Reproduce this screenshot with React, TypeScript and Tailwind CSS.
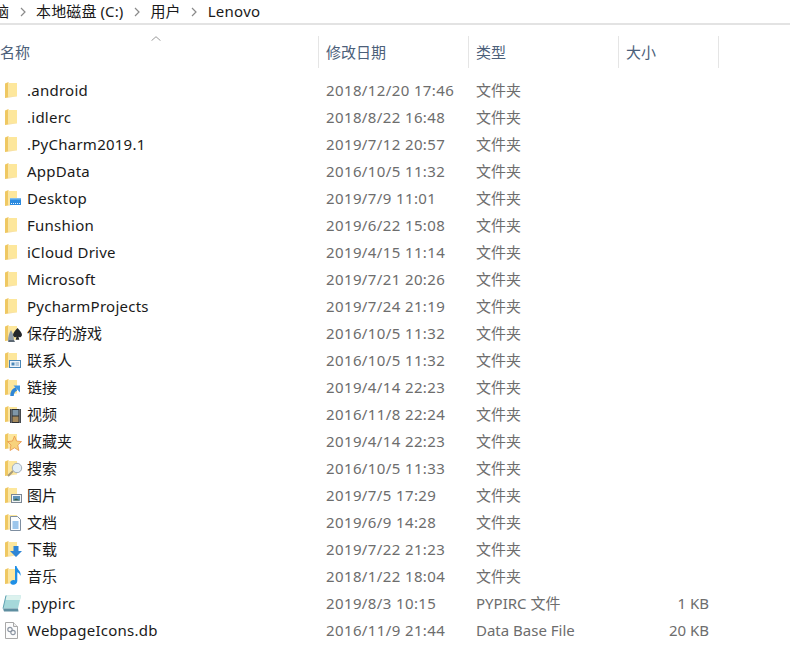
import React from 'react';

type Overlay = 'none' | 'desktop' | 'games' | 'contacts' | 'links' | 'videos' | 'favorites' | 'search' | 'pictures' | 'documents' | 'downloads' | 'music';

interface Row {
  name: string;
  date: string;
  type: string;
  size?: string;
  icon: Overlay | 'pypirc' | 'db';
}

const FOLDER = '文件夹';

const ROWS: Row[] = [
  { name: '.android', date: '2018/12/20 17:46', type: FOLDER, icon: 'none' },
  { name: '.idlerc', date: '2018/8/22 16:48', type: FOLDER, icon: 'none' },
  { name: '.PyCharm2019.1', date: '2019/7/12 20:57', type: FOLDER, icon: 'none' },
  { name: 'AppData', date: '2016/10/5 11:32', type: FOLDER, icon: 'none' },
  { name: 'Desktop', date: '2019/7/9 11:01', type: FOLDER, icon: 'desktop' },
  { name: 'Funshion', date: '2019/6/22 15:08', type: FOLDER, icon: 'none' },
  { name: 'iCloud Drive', date: '2019/4/15 11:14', type: FOLDER, icon: 'none' },
  { name: 'Microsoft', date: '2019/7/21 20:26', type: FOLDER, icon: 'none' },
  { name: 'PycharmProjects', date: '2019/7/24 21:19', type: FOLDER, icon: 'none' },
  { name: '保存的游戏', date: '2016/10/5 11:32', type: FOLDER, icon: 'games' },
  { name: '联系人', date: '2016/10/5 11:32', type: FOLDER, icon: 'contacts' },
  { name: '链接', date: '2019/4/14 22:23', type: FOLDER, icon: 'links' },
  { name: '视频', date: '2016/11/8 22:24', type: FOLDER, icon: 'videos' },
  { name: '收藏夹', date: '2019/4/14 22:23', type: FOLDER, icon: 'favorites' },
  { name: '搜索', date: '2016/10/5 11:33', type: FOLDER, icon: 'search' },
  { name: '图片', date: '2019/7/5 17:29', type: FOLDER, icon: 'pictures' },
  { name: '文档', date: '2019/6/9 14:28', type: FOLDER, icon: 'documents' },
  { name: '下载', date: '2019/7/22 21:23', type: FOLDER, icon: 'downloads' },
  { name: '音乐', date: '2018/1/22 18:04', type: FOLDER, icon: 'music' },
  { name: '.pypirc', date: '2019/8/3 10:15', type: 'PYPIRC 文件', size: '1 KB', icon: 'pypirc' },
  { name: 'WebpageIcons.db', date: '2016/11/9 21:44', type: 'Data Base File', size: '20 KB', icon: 'db' },
];

function OverlayArt({ kind }: { kind: Overlay }) {
  switch (kind) {
    case 'desktop':
      return (
        <>
          <rect x="5" y="8" width="11" height="7" fill="#2a8ae0" />
          <rect x="5" y="8" width="11" height="1.5" fill="#7dbdf0" />
          <path d="M6 13.500h1M8 13.500h1M10 13.500h1M12 13.500h1M14 13.500h1" stroke="#e8f4fd" strokeWidth="1" />
        </>
      );
    case 'games':
      return (
        <>
          <path d="M3 16c0-4 1-8 3-11 2 3 3 7 3 11z" fill="#8f9dab" />
          <path d="M4 15h5l1 2H3z" fill="#5c6873" />
          <path d="M12.500 3c2 2.500 4.500 4.500 4.500 7a2.300 2.300 0 0 1-3.500 1.800l.8 3h-3.600l.8-3A2.300 2.300 0 0 1 8 10c0-2.500 2.500-4.500 4.500-7z" fill="#22262b" />
        </>
      );
    case 'contacts':
      return (
        <>
          <rect x="4.500" y="8.500" width="11" height="7" fill="#eef4fa" stroke="#4a87b8" />
          <rect x="6.500" y="10.500" width="3" height="3" fill="#4a87b8" />
          <path d="M10.500 11h3.500M10.500 13h3.500" stroke="#7aa2c2" />
        </>
      );
    case 'links':
      return (
        <>
          <path d="M7 17c0-4 1.500-6 4.500-7" fill="none" stroke="#2f86d6" strokeWidth="3.500" />
          <path d="M8.500 6.500H15v7z" fill="#3d97e4" />
        </>
      );
    case 'videos':
      return (
        <>
          <rect x="5" y="3" width="11" height="14" fill="#2b2f33" />
          <rect x="7.500" y="4" width="6" height="5.500" fill="#7f97a8" />
          <rect x="7.500" y="10.500" width="6" height="5.500" fill="#a68a5c" />
          <path d="M6.200 3.500v13M14.800 3.500v13" stroke="#d8dde0" strokeDasharray="1 1" />
        </>
      );
    case 'favorites':
      return <path d="M9.500 3l2 5 5 .6-3.700 3.400 1 5.500-4.300-2.700L5 17.500l1-5.500-3.500-3.400 5-.6z" fill="#f8d27c" stroke="#e8964a" strokeWidth=".8" />;
    case 'search':
      return (
        <>
          <path d="M3 16l5-5" stroke="#a89b7a" strokeWidth="2" />
          <circle cx="12" cy="8" r="4.700" fill="#e3eff7" stroke="#a2aeba" />
        </>
      );
    case 'pictures':
      return (
        <>
          <rect x="6.500" y="7.500" width="10" height="8" fill="#f2f4f6" stroke="#7b8794" />
          <rect x="8" y="9" width="7" height="4.500" fill="#5f93b8" />
          <path d="M8 13.500l3-2 4 2z" fill="#3a5f44" />
        </>
      );
    case 'documents':
      return (
        <>
          <path d="M5.500 2.500h7l3 3v11h-10z" fill="#fbfdff" stroke="#7e8ea0" />
          <path d="M7.500 8h6M7.500 10h6M7.500 12h6M7.500 14h6" stroke="#3f8fd8" />
        </>
      );
    case 'downloads':
      return <path d="M8.500 5h5v5h3.500l-6 6-6-6h3.500z" fill="#2f86d6" />;
    case 'music':
      return <path d="M10 -2h1.500c.5 3.500 5 5 4 10-.5-2-2-3.500-3.200-3.800V13c0 2.500-2.300 4-4.500 3.700S4.500 14.500 6 13c1-1 2.800-1.100 4-.6z" fill="#1f8fe6" />;
    default:
      return null;
  }
}

function RowIcon({ kind }: { kind: Row['icon'] }) {
  if (kind === 'pypirc') {
    return (
      <svg width="20" height="17" viewBox="0 0 20 17" className="block -ml-[3px]">
        <path d="M4 .5h15l-3 13H1z" fill="#a5d8da" />
        <path d="M4.500.5H19l-1 4.500H3.500z" fill="#dcf2ee" />
        <path d="M1 13.500h15l.5 3H2z" fill="#5e8ea0" />
        <path d="M4 .5L1 13.500" stroke="#5fa0b0" />
      </svg>
    );
  }
  if (kind === 'db') {
    return (
      <svg width="13" height="17" viewBox="0 0 13 17" className="block">
        <path d="M.5.5h8l4 4v12H.5z" fill="#fcfcfc" stroke="#a8a8a8" />
        <path d="M8.500.5v4h4" fill="#eee" stroke="#a8a8a8" />
        <circle cx="5" cy="7.500" r="2.200" fill="none" stroke="#8d96a3" strokeWidth="1.200" />
        <circle cx="8" cy="10.500" r="2.200" fill="none" stroke="#8d96a3" strokeWidth="1.200" />
      </svg>
    );
  }
  return (
    <svg width="17" height="17" viewBox="0 0 17 17" className="block overflow-visible">
      <path d="M0 1.500L3.500 0v15.500L0 16z" fill="#efc862" />
      <path d="M3.500 1h8.500v13.500H3.500z" fill="#fde79c" />
      <path d="M3.500 14.500h8.500l-8.500 1z" fill="#f2d27c" />
      <OverlayArt kind={kind} />
    </svg>
  );
}

function Crumb({ label }: { label: string }) {
  return <span className="text-[15px] text-[#1a1a1a] tracking-[0.1px]">{label}</span>;
}

function Chevron() {
  return (
    <svg width="6" height="10" viewBox="0 0 6 10" className="mx-[10.5px] shrink-0">
      <path d="M1 1l4 4-4 4" fill="none" stroke="#8a8a8a" strokeWidth="1.200" />
    </svg>
  );
}

const hasCjk = (text: string) => /[\u4e00-\u9fff]/.test(text);

export default function App() {
  const font = "font-['Noto_Sans','Noto_Sans_CJK_SC',sans-serif]";
  return (
    <div className={`${font} w-[790px] h-[662px] overflow-hidden bg-white`}>
      {/* Breadcrumb */}
      <div className="h-[25px] flex items-center border-b-2 border-[#e3e3e3] whitespace-nowrap overflow-hidden">
        <div className="flex items-center -ml-[6px]">
          <Crumb label="脑" />
        </div>
        <Chevron />
        <Crumb label="本地磁盘 (C:)" />
        <Chevron />
        <Crumb label="用户" />
        <Chevron />
        <span className="text-[15px] text-[#1a1a1a] tracking-[0.3px]">Lenovo</span>
      </div>

      {/* Column headers */}
      <div className="relative flex h-[32px] mt-[11px] text-[15px] text-[#4c607a]">
        <svg width="10" height="5" viewBox="0 0 10 5" className="absolute left-[151px] top-0">
          <path d="M.5 4.700l4.500-4 4.500 4" fill="none" stroke="#9a9a9a" />
        </svg>
        <div className="w-[318px] flex items-center">名称</div>
        <div className="w-[150px] flex items-center pl-[7px] border-l border-[#e5e5e5]">修改日期</div>
        <div className="w-[150px] flex items-center pl-[7px] border-l border-[#e5e5e5]">类型</div>
        <div className="w-[101px] flex items-center pl-[7px] border-x border-[#e5e5e5]">大小</div>
      </div>

      {/* File rows */}
      <div className="mt-[9px] flex flex-col">
        {ROWS.map((row) => (
          <div key={row.name} className="flex h-[27px] items-center text-[15px] whitespace-nowrap">
            <div className="w-[27px] pl-[5px] flex items-center shrink-0">
              <RowIcon kind={row.icon} />
            </div>
            <div className={`w-[299px] text-[#1a1a1a] ${hasCjk(row.name) ? '' : 'tracking-[0.25px]'}`}>{row.name}</div>
            <div className="w-[150px] text-[#6d6d6d] tracking-[0.38px]">{row.date}</div>
            <div className="w-[150px] text-[#6d6d6d]">{row.type}</div>
            <div className="w-[83px] text-right text-[#6d6d6d]">{row.size}</div>
          </div>
        ))}
      </div>
    </div>
  );
}
